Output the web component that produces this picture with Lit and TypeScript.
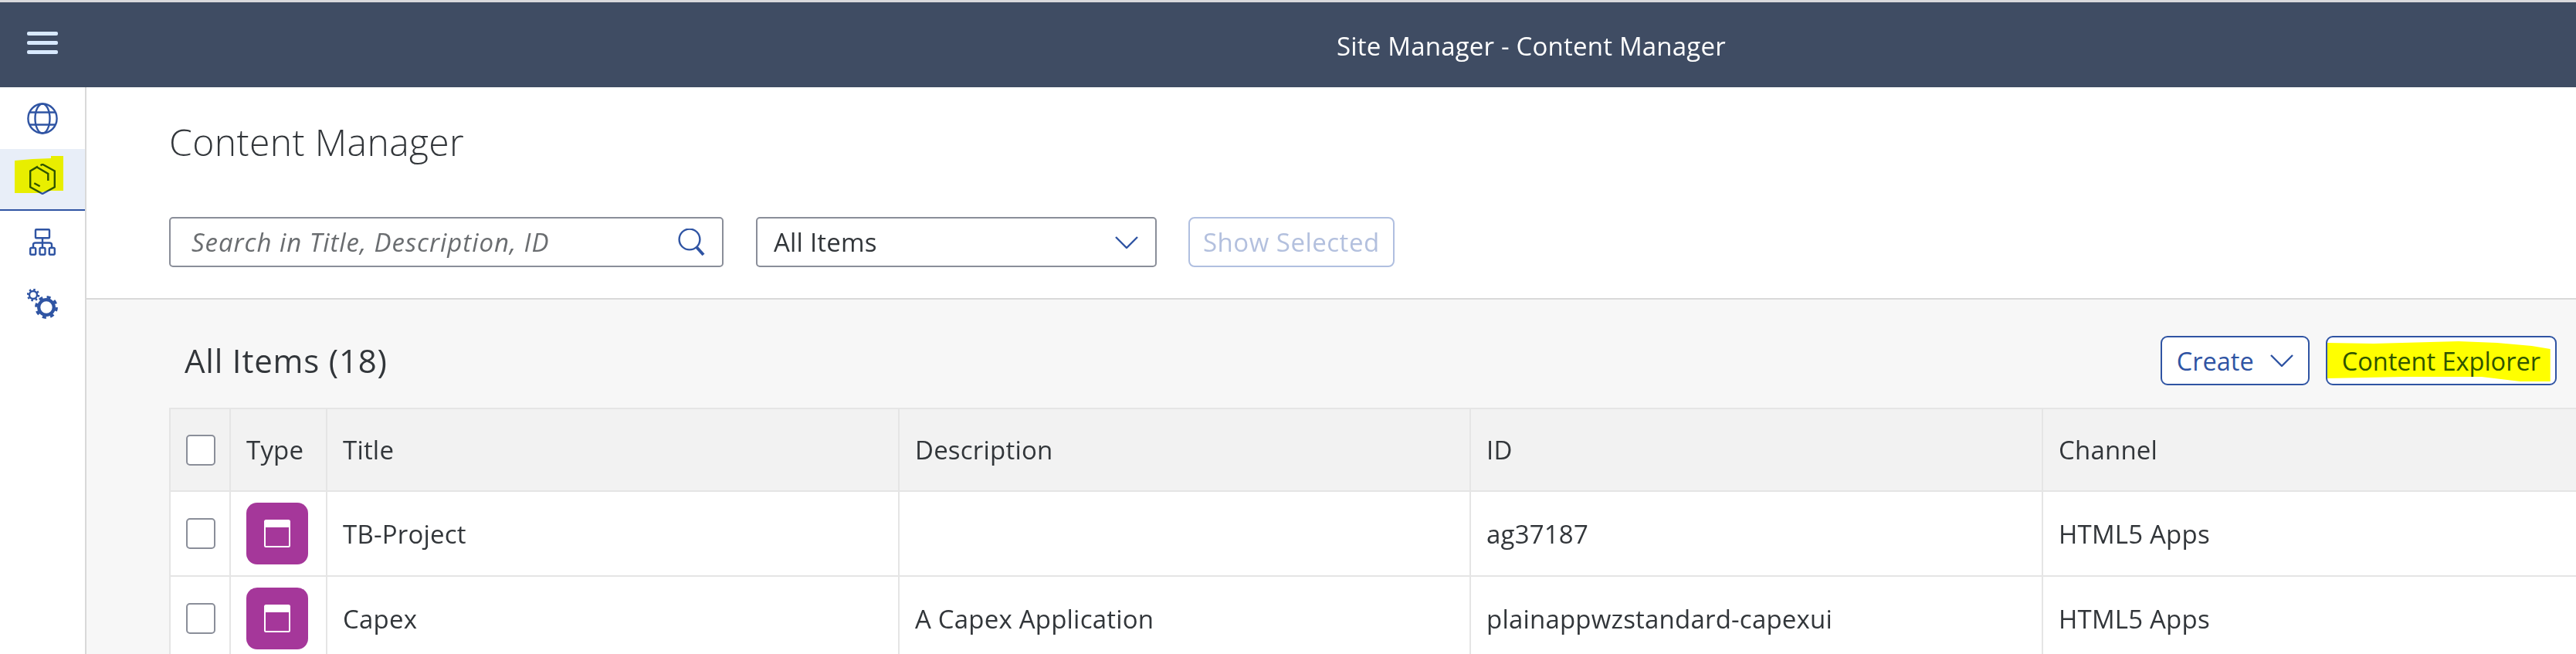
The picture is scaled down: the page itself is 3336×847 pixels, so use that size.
import { LitElement, html, css, svg } from 'lit';
import { customElement } from 'lit/decorators.js';

const rows = [
  { title: 'TB-Project', description: '', id: 'ag37187', channel: 'HTML5 Apps' },
  { title: 'Capex', description: 'A Capex Application', id: 'plainappwzstandard-capexui', channel: 'HTML5 Apps' },
];

const chevron = svg`<path d="M1 1 L15 15 L29 1" fill="none" stroke="currentColor" stroke-width="2.4"/>`;

@customElement('app-root')
export class AppRoot extends LitElement {
  static styles = css`
    :host {
      display: block;
      width: 3336px;
      height: 847px;
      overflow: hidden;
      background: #fff;
      font-family: "Open Sans", "Liberation Sans", sans-serif;
      font-size: 33px;
      letter-spacing: 0.2px;
      color: #32363a;
    }
    .shell-top {
      height: 3px;
      background: #d9d9dc;
    }
    .shell {
      height: 110px;
      background: #3f4c63;
      display: flex;
      align-items: center;
      position: relative;
    }
    .menu {
      width: 110px;
      display: flex;
      justify-content: center;
      margin-top: -5px;
    }
    .shell-title {
      position: absolute;
      left: 1731px;
      top: 38px;
      line-height: 38px;
      color: #fff;
      white-space: nowrap;
    }
    .body {
      display: flex;
      height: 734px;
    }
    .nav {
      width: 110px;
      flex: none;
      border-right: 2px solid #d9d9d9;
    }
    .nav-item {
      height: 80px;
      display: flex;
      align-items: center;
      justify-content: center;
      color: #2f54a3;
      position: relative;
    }
    .nav-item.active {
      background: #e8eef8;
      box-sizing: border-box;
      border-bottom: 2px solid #2f54a3;
    }
    .mark-nav {
      position: absolute;
      left: 19px;
      top: 9px;
      width: 63px;
      height: 48px;
      background: #ffff00;
      mix-blend-mode: multiply;
      clip-path: polygon(0 6px, 23px 4px, 47px 3px, 47px 0, 63px 0, 63px 45px, 44px 45px, 30px 48px, 0 48px);
    }
    .main {
      flex: 1;
      min-width: 0;
      display: flex;
      flex-direction: column;
    }
    .page-head {
      height: 275px;
      box-sizing: border-box;
      padding: 43px 0 0 107px;
      border-bottom: 2px solid #d9d9d9;
      flex: none;
    }
    h1 {
      margin: 0;
      font-size: 48px;
      font-weight: 300;
      line-height: 56px;
      letter-spacing: 0.4px;
    }
    .filters {
      display: flex;
      gap: 42px;
      margin-top: 69px;
    }
    .search, .select {
      height: 65px;
      box-sizing: border-box;
      border: 2px solid #8a8e99;
      border-radius: 5px;
      display: flex;
      align-items: center;
      justify-content: space-between;
      background: #fff;
    }
    .search {
      width: 718px;
      padding: 0 21px 0 27px;
    }
    .placeholder {
      font-style: italic;
      color: #6a6d70;
      letter-spacing: 0.95px;
    }
    .select {
      width: 519px;
      padding: 0 22px 0 21px;
    }
    .select svg {
      color: #2f54a3;
    }
    .ghost {
      height: 65px;
      box-sizing: border-box;
      padding: 0 17px;
      display: flex;
      align-items: center;
      border: 2px solid #b0bfe0;
      border-radius: 8px;
      color: #b3c0de;
      margin-left: -1px;
      letter-spacing: 0.5px;
    }
    .content {
      flex: 1;
      background: #f7f7f7;
      padding-left: 107px;
      min-height: 0;
    }
    .content-bar {
      height: 140px;
      display: flex;
      align-items: center;
      justify-content: space-between;
      padding: 18px 25px 0 20px;
      box-sizing: border-box;
      position: relative;
    }
    h2 {
      margin: 0;
      font-size: 42px;
      font-weight: 400;
      line-height: 50px;
      letter-spacing: 0.8px;
    }
    .actions {
      display: flex;
      gap: 21px;
    }
    .btn {
      height: 64px;
      box-sizing: border-box;
      border: 2px solid #2f54a3;
      border-radius: 9px;
      background: #fff;
      color: #2f54a3;
      display: flex;
      align-items: center;
      gap: 21px;
      padding: 0 19px;
      position: relative;
      font-size: 32.5px;
      letter-spacing: 0;
    }
    .mark-btn {
      position: absolute;
      left: 0;
      top: 5px;
      width: 289px;
      height: 52px;
      background: #ffff00;
      mix-blend-mode: multiply;
      clip-path: polygon(0 2px, 60px 3px, 170px 0, 220px 2px, 265px 6px, 289px 10px, 289px 52px, 250px 52px, 200px 46px, 100px 46px, 0 48px);
    }
    .table {
      display: grid;
      grid-template-columns: 78px 125px 741px 740px 741px 1fr;
      border-top: 2px solid #e5e5e5;
      border-left: 2px solid #e5e5e5;
    }
    .cell {
      height: 110px;
      box-sizing: border-box;
      display: flex;
      align-items: center;
      padding-left: 20px;
      background: #fff;
      border-right: 2px solid #e5e5e5;
      border-bottom: 2px solid #e5e5e5;
      white-space: nowrap;
    }
    .cell.head {
      height: 107px;
      background: #f2f2f2;
    }
    .cell.last {
      border-right: none;
    }
    .check {
      width: 38px;
      height: 40px;
      box-sizing: border-box;
      border: 2px solid #8a8e99;
      border-radius: 5px;
      background: #fff;
    }
    .type {
      width: 80px;
      height: 80px;
      border-radius: 14px;
      background: #a5379a;
      display: flex;
      align-items: center;
      justify-content: center;
    }
  `;

  renderRow(row: (typeof rows)[number]) {
    return html`
      <div class="cell"><span class="check"></span></div>
      <div class="cell">
        <span class="type">
          <svg width="34" height="36" viewBox="0 0 34 36">
            <rect x="1" y="1" width="32" height="34" rx="1.5" fill="none" stroke="#fff" stroke-width="2"/>
            <rect x="1" y="1" width="32" height="9" fill="#fff"/>
          </svg>
        </span>
      </div>
      <div class="cell">${row.title}</div>
      <div class="cell">${row.description}</div>
      <div class="cell">${row.id}</div>
      <div class="cell last">${row.channel}</div>
    `;
  }

  render() {
    return html`
      <div class="shell-top"></div>
      <header class="shell">
        <div class="menu">
          <svg width="40" height="29" viewBox="0 0 40 29" fill="#d8e9ff">
            <rect width="40" height="5" rx="2"/>
            <rect y="12" width="40" height="5" rx="2"/>
            <rect y="24" width="40" height="5" rx="2"/>
          </svg>
        </div>
        <div class="shell-title">Site Manager - Content Manager</div>
      </header>
      <div class="body">
        <nav class="nav">
          <div class="nav-item">
            <svg width="40" height="41" viewBox="0 0 40 41" fill="none" stroke="currentColor" stroke-width="2.4">
              <ellipse cx="20" cy="20.5" rx="18.6" ry="19"/>
              <ellipse cx="20" cy="20.5" rx="9.5" ry="19"/>
              <path d="M4 12.5 H36 M4 28.5 H36"/>
            </svg>
          </div>
          <div class="nav-item active">
            <svg width="34" height="40" viewBox="0 0 34 40" fill="none" stroke="currentColor" stroke-width="2.4">
              <path d="M11 3.6 L1.2 9.4 V30.3 L17 39 L32.8 30.3 V9.4 L17 .8 L14.5 2.2"/>
              <path d="M10.3 4.7 L24.3 13 V22"/>
              <path d="M6.3 25.3 L13.7 29.3"/>
            </svg>
            <span class="mark-nav"></span>
          </div>
          <div class="nav-item">
            <svg width="34" height="35" viewBox="0 0 34 35" fill="none" stroke="currentColor" stroke-width="2.4">
              <rect x="8" y="1.2" width="18" height="11" rx="1"/>
              <path d="M17 12 V25 M5 25 V21 Q5 18.5 8 18.5 H26 Q29 18.5 29 21 V25"/>
              <rect x="1.2" y="25" width="7" height="8.8" rx="1.5"/>
              <rect x="13.5" y="25" width="7" height="8.8" rx="1.5"/>
              <rect x="25.8" y="25" width="7" height="8.8" rx="1.5"/>
            </svg>
          </div>
          <div class="nav-item">
            <svg width="40" height="39" viewBox="0 0 40 39" fill="none" stroke="currentColor">
              <circle cx="8" cy="8" r="5" stroke-width="2.4"/>
              <circle cx="8" cy="8" r="7" stroke-width="2.6" stroke-dasharray="2.5 3"/>
              <circle cx="25" cy="24" r="9.8" stroke-width="4.2"/>
              <circle cx="25" cy="24" r="13.2" stroke-width="3.4" stroke-dasharray="5 5.4"/>
            </svg>
          </div>
        </nav>
        <main class="main">
          <section class="page-head">
            <h1>Content Manager</h1>
            <div class="filters">
              <div class="search">
                <span class="placeholder">Search in Title, Description, ID</span>
                <svg width="36" height="36" viewBox="0 0 36 36" fill="none" stroke="#2f54a3">
                  <circle cx="15" cy="14" r="13.4" stroke-width="2.4"/>
                  <path d="M24 24 L33 34" stroke-width="4"/>
                </svg>
              </div>
              <div class="select">
                <span>All Items</span>
                <svg width="30" height="16" viewBox="0 0 30 16">${chevron}</svg>
              </div>
              <div class="ghost">Show Selected</div>
            </div>
          </section>
          <section class="content">
            <div class="content-bar">
              <h2>All Items (18)</h2>
              <div class="actions">
                <div class="btn">Create <svg width="30" height="16" viewBox="0 0 30 16">${chevron}</svg></div>
                <div class="btn">Content Explorer<span class="mark-btn"></span></div>
              </div>
            </div>
            <div class="table">
              <div class="cell head"><span class="check"></span></div>
              <div class="cell head">Type</div>
              <div class="cell head">Title</div>
              <div class="cell head">Description</div>
              <div class="cell head">ID</div>
              <div class="cell head last">Channel</div>
              ${rows.map((row) => this.renderRow(row))}
            </div>
          </section>
        </main>
      </div>
    `;
  }
}
